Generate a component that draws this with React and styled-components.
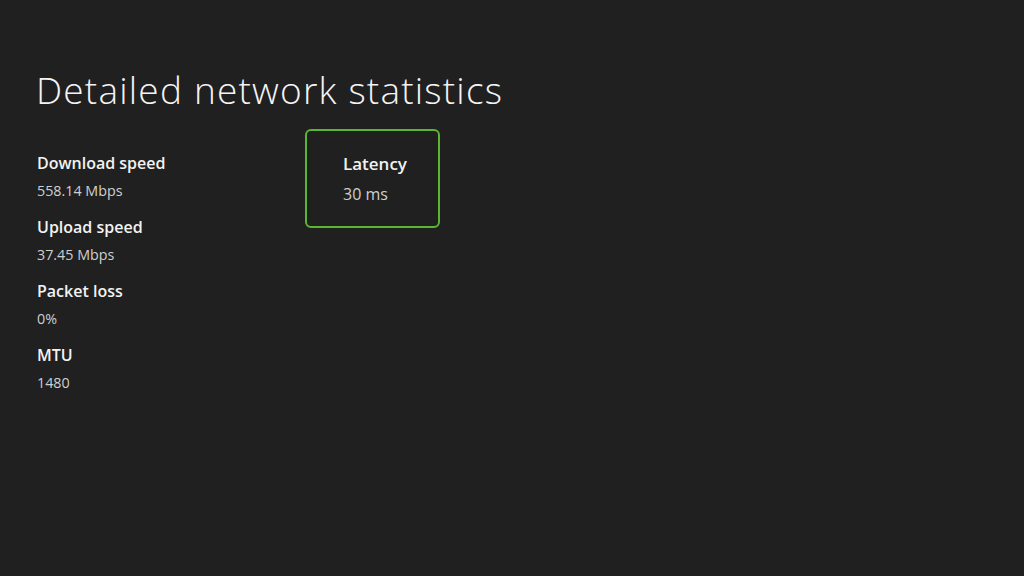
import React from "react";
import styled, { createGlobalStyle } from "styled-components";

const Global = createGlobalStyle`
  html, body { margin: 0; padding: 0; background: #202020; }
  body { width: 1024px; height: 576px; overflow: hidden; }
`;

const Page = styled.div`
  width: 1024px;
  height: 576px;
  box-sizing: border-box;
  background: #202020;
  padding: 66px 0 0 36px;
  font-family: "Open Sans", "Noto Sans", sans-serif;
  color: #f2f2f2;
`;

const Title = styled.h1`
  margin: 0;
  font-family: "Open Sans", sans-serif;
  font-weight: 300;
  font-size: 37px;
  line-height: 48px;
  letter-spacing: 1.2px;
  color: #f4f4f4;
`;

const Body = styled.div`
  display: flex;
  align-items: flex-start;
  margin-top: 15px;
`;

const List = styled.div`
  display: flex;
  flex-direction: column;
  gap: 15px;
  width: 269px;
  padding-top: 23px;
`;

const Stat = styled.div`
  display: flex;
  flex-direction: column;
  gap: 7px;
  padding-left: 1px;
`;

const Label = styled.div`
  font-size: ${(p) => (p.$large ? "17px" : "16px")};
  font-weight: 600;
  line-height: 22px;
  color: #f2f2f2;
`;

const Value = styled.div`
  font-size: ${(p) => (p.$large ? "16px" : "14.3px")};
  font-weight: 400;
  line-height: 20px;
  color: #cfcfcf;
`;

const Card = styled.div`
  box-sizing: border-box;
  width: 135px;
  height: 99px;
  border: 2px solid #5bb531;
  border-radius: 6px;
  padding: 22px 0 0 36px;
  display: flex;
  flex-direction: column;
  gap: 9px;
`;

const stats = [
  ["Download speed", "558.14 Mbps"],
  ["Upload speed", "37.45 Mbps"],
  ["Packet loss", "0%"],
  ["MTU", "1480"],
];

export default function App() {
  return (
    <>
      <Global />
      <Page>
        <Title>Detailed network statistics</Title>
        <Body>
          <List>
            {stats.map(([l, v]) => (
              <Stat key={l}>
                <Label>{l}</Label>
                <Value>{v}</Value>
              </Stat>
            ))}
          </List>
          <Card>
            <Label $large>Latency</Label>
            <Value $large>30 ms</Value>
          </Card>
        </Body>
      </Page>
    </>
  );
}
